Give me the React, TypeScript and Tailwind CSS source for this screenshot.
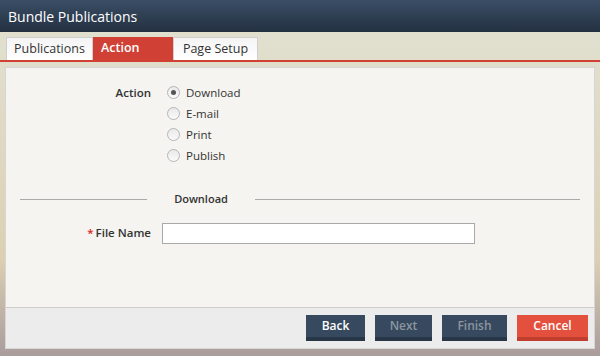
import React from "react";

function Radio({ checked, label }: { checked?: boolean; label: string }) {
  return (
    <div className="flex items-center h-[21px]">
      <span className="w-[13px] h-[13px] rounded-full border border-[#b5b5b5] bg-gradient-to-b from-[#e9e9e9] to-[#fafafa] flex items-center justify-center ml-[5px] mr-[6px]">
        {checked && <span className="w-[5px] h-[5px] rounded-full bg-[#555]" />}
      </span>
      <span className="text-[11.5px] text-[#333]">{label}</span>
    </div>
  );
}

export default function App() {
  return (
    <div className="w-[600px] h-[356px] flex flex-col overflow-hidden" style={{ fontFamily: '"Open Sans", "Noto Sans", sans-serif' }}>
      <div className="h-[32px] shrink-0 bg-gradient-to-b from-[#3b4e66] to-[#233141] flex items-center px-[8px]">
        <span className="text-white text-[14px]">Bundle Publications</span>
      </div>
      <div className="flex-1 flex flex-col bg-gradient-to-b from-[#e1e0cf] via-[#ddd0b2] via-70% to-[#a99c9c] pb-[7px]">
        <div className="h-[30px] shrink-0 flex items-end pl-[6px] border-b-2 border-[#d04034]">
          <div className="h-[23px] w-[87px] flex items-center justify-center bg-gradient-to-b from-[#f4f4f4] to-[#ffffff] border border-b-0 border-[#cfcfcf] text-[12.5px] text-[#333]">Publications</div>
          <div className="h-[23px] w-[80px] flex items-center pl-[8px] bg-[#d04034] text-[12.5px] text-white font-semibold">Action</div>
          <div className="h-[23px] w-[85px] flex items-center justify-center bg-gradient-to-b from-[#f4f4f4] to-[#ffffff] border border-b-0 border-[#cfcfcf] text-[12.5px] text-[#333]">Page Setup</div>
        </div>
        <div className="mt-[5px] ml-[5px] w-[590px] flex-1 flex flex-col border border-[#d6d6d6]">
          <div className="flex-1 bg-[#f5f4f0] flex flex-col">
            <div className="flex mt-[14px]">
              <div className="w-[145px] text-right text-[11.5px] font-semibold text-[#333] h-[21px] leading-[21px]">Action</div>
              <div className="ml-[11px] flex flex-col">
                <Radio checked label="Download" />
                <Radio label="E-mail" />
                <Radio label="Print" />
                <Radio label="Publish" />
              </div>
            </div>
            <div className="flex items-center mt-[25px] ml-[14px] mr-[14px]">
              <div className="w-[127px] h-px bg-[#aaa]" />
              <div className="w-[108px] text-center text-[11px] font-semibold text-[#333]">Download</div>
              <div className="flex-1 h-px bg-[#aaa]" />
            </div>
            <div className="flex items-center mt-[15px]">
              <div className="w-[145px] text-right text-[11.5px] font-semibold text-[#333]">
                <span className="text-[#e02020] mr-[2px]">*</span>File Name
              </div>
              <input className="ml-[11px] w-[313px] h-[21px] border border-[#a9a9a9] bg-white" />
            </div>
          </div>
          <div className="h-[41px] shrink-0 bg-[#ececec] border-t border-[#cccccc] flex items-center justify-end pr-[6px] gap-[10px]">
            <button className="w-[59px] h-[26px] bg-[#36495e] border-b-4 border-[#283748] text-white text-[12px] font-semibold">Back</button>
            <button className="w-[57px] h-[26px] bg-[#36495e] border-b-4 border-[#283748] text-[#8c96a0] text-[12px] font-semibold">Next</button>
            <button className="w-[65px] h-[26px] bg-[#36495e] border-b-4 border-[#283748] text-[#8c96a0] text-[12px] font-semibold">Finish</button>
            <button className="w-[71px] h-[26px] bg-[#e4503e] border-b-4 border-[#c13d2e] text-white text-[12px] font-semibold">Cancel</button>
          </div>
        </div>
      </div>
    </div>
  );
}
